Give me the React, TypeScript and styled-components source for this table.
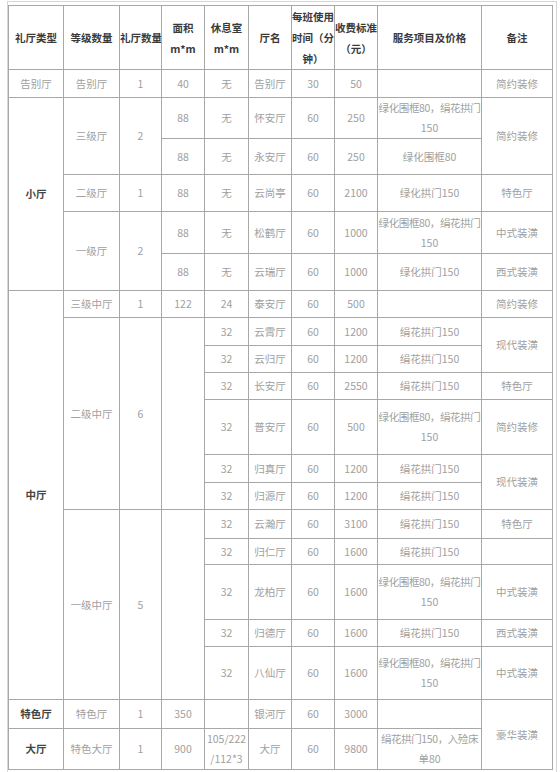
import React from 'react';
import styled, { createGlobalStyle } from 'styled-components';

const GlobalStyle = createGlobalStyle`
  html, body {
    margin: 0;
    padding: 0;
    background: #fff;
  }
  body {
    font-family: "Noto Sans CJK SC", "Noto Sans", sans-serif;
  }
`;

const Frame = styled.div`
  margin: 1px 0 0 7px;
  width: 550px;
  height: 771px;
  box-sizing: border-box;
  border: 1px solid #d6d6d6;
  border-bottom: none;
  padding-top: 3px;
`;

const Table = styled.table`
  border-collapse: collapse;
  table-layout: fixed;
  width: 544px;
  font-size: 10.5px;
  color: #a0a0a0;
`;

const Row = styled.tr<{ $h: number }>`
  height: ${p => p.$h}px;
`;

const Th = styled.th`
  border: 1px solid #a8a8a8;
  padding: 0;
  text-align: center;
  vertical-align: middle;
  line-height: 21px;
  font-weight: bold;
  color: #3a3a3a;
  white-space: nowrap;
  overflow: hidden;
`;

const Td = styled.td<{ $strong?: boolean }>`
  border: 1px solid #a8a8a8;
  padding: 0;
  text-align: center;
  vertical-align: middle;
  line-height: 20px;
  white-space: nowrap;
  overflow: hidden;
  font-weight: ${p => (p.$strong ? 'bold' : 'normal')};
  color: ${p => (p.$strong ? '#444' : 'inherit')};
`;

// a line that just fills the service column
const Tight = styled.span`
  letter-spacing: -0.4px;
`;

const colWidths = [55, 56, 42, 43, 44, 43, 43, 43, 104, 71];

const both = (
  <>
    <Tight>绿化围框80，绢花拱门</Tight>
    <br />
    150
  </>
);

const App: React.FC = () => {
  return (
    <>
      <GlobalStyle />
      <Frame>
        <Table>
          <colgroup>
            {colWidths.map((w, i) => (
              <col key={i} style={{ width: w }} />
            ))}
          </colgroup>
          <thead>
            <Row $h={63}>
              <Th>礼厅类型</Th>
              <Th>等级数量</Th>
              <Th>礼厅数量</Th>
              <Th>
                面积
                <br />
                m*m
              </Th>
              <Th>
                休息室
                <br />
                m*m
              </Th>
              <Th>厅名</Th>
              <Th>
                每班使用
                <br />
                时间（分
                <br />
                钟）
              </Th>
              <Th>
                收费标准
                <br />
                （元）
              </Th>
              <Th>服务项目及价格</Th>
              <Th>备注</Th>
            </Row>
          </thead>
          <tbody>
            <Row $h={28}>
              <Td>告别厅</Td>
              <Td>告别厅</Td>
              <Td>1</Td>
              <Td>40</Td>
              <Td>无</Td>
              <Td>告别厅</Td>
              <Td>30</Td>
              <Td>50</Td>
              <Td />
              <Td>简约装修</Td>
            </Row>

            {/* 小厅 */}
            <Row $h={41}>
              <Td $strong rowSpan={5}>小厅</Td>
              <Td rowSpan={2}>三级厅</Td>
              <Td rowSpan={2}>2</Td>
              <Td>88</Td>
              <Td>无</Td>
              <Td>怀安厅</Td>
              <Td>60</Td>
              <Td>250</Td>
              <Td>{both}</Td>
              <Td rowSpan={2}>简约装修</Td>
            </Row>
            <Row $h={36}>
              <Td>88</Td>
              <Td>无</Td>
              <Td>永安厅</Td>
              <Td>60</Td>
              <Td>250</Td>
              <Td>绿化围框80</Td>
            </Row>
            <Row $h={37}>
              <Td>二级厅</Td>
              <Td>1</Td>
              <Td>88</Td>
              <Td>无</Td>
              <Td>云尚亭</Td>
              <Td>60</Td>
              <Td>2100</Td>
              <Td>绿化拱门150</Td>
              <Td>特色厅</Td>
            </Row>
            <Row $h={42}>
              <Td rowSpan={2}>一级厅</Td>
              <Td rowSpan={2}>2</Td>
              <Td>88</Td>
              <Td>无</Td>
              <Td>松鹤厅</Td>
              <Td>60</Td>
              <Td>1000</Td>
              <Td>{both}</Td>
              <Td>中式装潢</Td>
            </Row>
            <Row $h={37}>
              <Td>88</Td>
              <Td>无</Td>
              <Td>云瑞厅</Td>
              <Td>60</Td>
              <Td>1000</Td>
              <Td>绿化拱门150</Td>
              <Td>西式装潢</Td>
            </Row>

            {/* 中厅 */}
            <Row $h={27}>
              <Td $strong rowSpan={12}>中厅</Td>
              <Td>三级中厅</Td>
              <Td>1</Td>
              <Td>122</Td>
              <Td>24</Td>
              <Td>泰安厅</Td>
              <Td>60</Td>
              <Td>500</Td>
              <Td />
              <Td>简约装修</Td>
            </Row>
            <Row $h={28}>
              <Td rowSpan={6}>二级中厅</Td>
              <Td rowSpan={6}>6</Td>
              <Td rowSpan={6} />
              <Td>32</Td>
              <Td>云霄厅</Td>
              <Td>60</Td>
              <Td>1200</Td>
              <Td>绢花拱门150</Td>
              <Td rowSpan={2}>现代装潢</Td>
            </Row>
            <Row $h={27}>
              <Td>32</Td>
              <Td>云归厅</Td>
              <Td>60</Td>
              <Td>1200</Td>
              <Td>绢花拱门150</Td>
            </Row>
            <Row $h={27}>
              <Td>32</Td>
              <Td>长安厅</Td>
              <Td>60</Td>
              <Td>2550</Td>
              <Td>绢花拱门150</Td>
              <Td>特色厅</Td>
            </Row>
            <Row $h={55}>
              <Td>32</Td>
              <Td>普安厅</Td>
              <Td>60</Td>
              <Td>500</Td>
              <Td>{both}</Td>
              <Td>简约装修</Td>
            </Row>
            <Row $h={28}>
              <Td>32</Td>
              <Td>归真厅</Td>
              <Td>60</Td>
              <Td>1200</Td>
              <Td>绢花拱门150</Td>
              <Td rowSpan={2}>现代装潢</Td>
            </Row>
            <Row $h={27}>
              <Td>32</Td>
              <Td>归源厅</Td>
              <Td>60</Td>
              <Td>1200</Td>
              <Td>绢花拱门150</Td>
            </Row>
            <Row $h={29}>
              <Td rowSpan={5}>一级中厅</Td>
              <Td rowSpan={5}>5</Td>
              <Td rowSpan={5} />
              <Td>32</Td>
              <Td>云瀚厅</Td>
              <Td>60</Td>
              <Td>3100</Td>
              <Td>绢花拱门150</Td>
              <Td>特色厅</Td>
            </Row>
            <Row $h={26}>
              <Td>32</Td>
              <Td>归仁厅</Td>
              <Td>60</Td>
              <Td>1600</Td>
              <Td>绢花拱门150</Td>
              <Td />
            </Row>
            <Row $h={55}>
              <Td>32</Td>
              <Td>龙柏厅</Td>
              <Td>60</Td>
              <Td>1600</Td>
              <Td>{both}</Td>
              <Td>中式装潢</Td>
            </Row>
            <Row $h={27}>
              <Td>32</Td>
              <Td>归德厅</Td>
              <Td>60</Td>
              <Td>1600</Td>
              <Td>绢花拱门150</Td>
              <Td>西式装潢</Td>
            </Row>
            <Row $h={53}>
              <Td>32</Td>
              <Td>八仙厅</Td>
              <Td>60</Td>
              <Td>1600</Td>
              <Td>{both}</Td>
              <Td>中式装潢</Td>
            </Row>

            {/* 特色厅 / 大厅 */}
            <Row $h={29}>
              <Td $strong>特色厅</Td>
              <Td>特色厅</Td>
              <Td>1</Td>
              <Td>350</Td>
              <Td />
              <Td>银河厅</Td>
              <Td>60</Td>
              <Td>3000</Td>
              <Td />
              <Td rowSpan={2}>豪华装潢</Td>
            </Row>
            <Row $h={41}>
              <Td $strong>大厅</Td>
              <Td>特色大厅</Td>
              <Td>1</Td>
              <Td>900</Td>
              <Td>
                105/222
                <br />
                /112*3
              </Td>
              <Td>大厅</Td>
              <Td>60</Td>
              <Td>9800</Td>
              <Td>
                <Tight>绢花拱门150，入殓床</Tight>
                <br />
                单80
              </Td>
            </Row>
          </tbody>
        </Table>
      </Frame>
    </>
  );
};

export default App;
